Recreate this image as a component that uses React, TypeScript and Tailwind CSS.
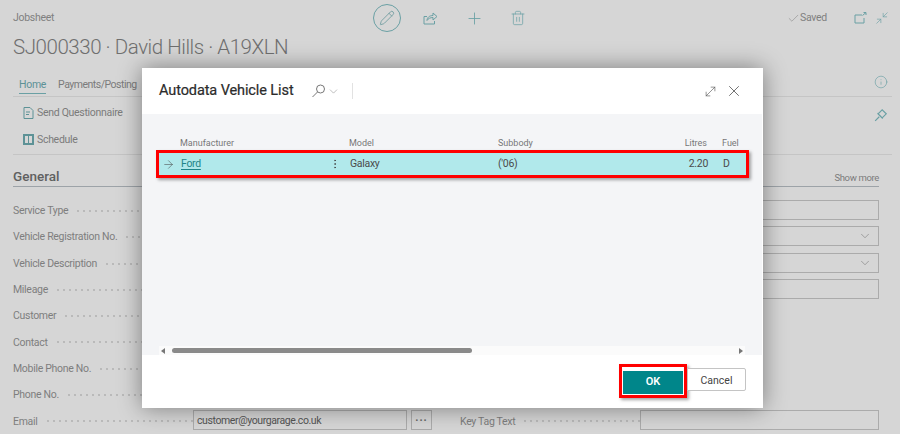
import { ArrowRight, Check, ChevronDown, EllipsisVertical, Info, Minimize2, MoveDiagonal, Pencil, Plus, Trash2, X } from "lucide-react";

const rows = [
  { label: "Service Type", right: "input" },
  { label: "Vehicle Registration No.", right: "select" },
  { label: "Vehicle Description", right: "select" },
  { label: "Mileage", right: "input" },
  { label: "Customer" },
  { label: "Contact" },
  { label: "Mobile Phone No." },
  { label: "Phone No." },
  { label: "Email", value: "customer@yourgarage.co.uk", rightLabel: "Key Tag Text", right: "input" },
];

function Dots() {
  return <div className="ml-[7px] h-[2px] flex-1 bg-[radial-gradient(circle,#b8b8b8_0.7px,transparent_0.9px)] bg-[length:6px_2px]" />;
}

function FormRow({ row }: { row: (typeof rows)[number] }) {
  return (
    <div className="flex h-[26.3px] items-start">
      <div className="flex h-[20px] w-[180px] shrink-0 items-center pt-[2px] text-[10.5px] tracking-[-0.3px] text-[#7e7e7e]">
        {row.label}
        <Dots />
      </div>
      <div className="h-[20px] w-[214px] shrink-0 border border-[#ababab] pl-[3px] text-[10.5px] leading-[19px] tracking-[-0.4px] text-[#555]">{row.value}</div>
      {row.value && <div className="ml-[4px] flex h-[20px] w-[21px] shrink-0 items-center justify-center border border-[#ababab] pb-[5px] text-[11px] leading-none font-bold tracking-[1px] text-[#666]">...</div>}
      <div className={row.value ? "ml-[28px] flex h-[20px] w-[180px] shrink-0 items-center pt-[2px] text-[10.5px] tracking-[-0.3px] text-[#7e7e7e]" : "ml-[53px] flex h-[20px] w-[180px] shrink-0 items-center pt-[2px] text-[10.5px] tracking-[-0.3px] text-[#7e7e7e]"}>
        {row.rightLabel}
        {row.rightLabel && <Dots />}
      </div>
      {row.right && (
        <div className="flex h-[20px] w-[239px] shrink-0 items-center justify-end border border-[#ababab] pr-[6px]">
          {row.right === "select" && <ChevronDown size={14} strokeWidth={1} className="text-[#777]" />}
        </div>
      )}
    </div>
  );
}

function Modal() {
  return (
    <div className="absolute top-[68px] left-[142px] flex h-[340px] w-[621px] flex-col bg-white shadow-[0_0_22px_rgba(0,0,0,0.42)]">
      <div className="flex h-[46px] shrink-0 items-center pr-[20px] pl-[17px]">
        <h2 className="text-[14.5px] leading-none font-normal tracking-[-0.1px] text-[#2b2b2b] [-webkit-text-stroke:0.2px_#2b2b2b]">Autodata Vehicle List</h2>
        <svg width="13" height="14" viewBox="0 0 13 14" fill="none" stroke="#777" className="ml-[18px]">
          <circle cx="8.500" cy="5" r="4" />
          <path d="M5.500 8 .5 13" />
        </svg>
        <ChevronDown size={13} strokeWidth={1} className="ml-[2px] text-[#888]" />
        <div className="ml-[12px] h-[16px] w-px bg-[#e2e2e2]" />
        <MoveDiagonal size={15} strokeWidth={1} className="ml-auto text-[#555]" />
        <X size={18} strokeWidth={1} className="ml-[7px] text-[#444]" />
      </div>
      <div className="mr-px flex min-h-0 flex-1 flex-col bg-[#f4f5f7] pt-[22px]">
        <div className="grid h-[14px] shrink-0 grid-cols-[169px_149px_182px_27px_1fr] pl-[38px] text-[9px] leading-[14px] text-[#777]">
          <span>Manufacturer</span>
          <span>Model</span>
          <span>Subbody</span>
          <span className="text-right">Litres</span>
          <span className="ml-[15px]">Fuel</span>
        </div>
        <div className="mx-[14px] h-[28px] w-[593px] shrink-0 border-[3px] border-[#ff0000] shadow-[2px_2px_3px_rgba(0,0,0,0.35)]">
          <div className="grid h-full grid-cols-[19px_150px_19px_148px_170px_40px_1fr] items-center bg-[#b1e9eb] pl-[3px] text-[10.5px] tracking-[-0.3px] text-[#4b4b4b]">
            <ArrowRight size={13} strokeWidth={1} className="text-[#444]" />
            <a className="text-[#1f8589] underline underline-offset-2">Ford</a>
            <EllipsisVertical size={12} strokeWidth={1.5} className="-ml-[2px] text-[#444]" />
            <span>Galaxy</span>
            <span>('06)</span>
            <span className="text-right">2.20</span>
            <span className="ml-[15px]">D</span>
          </div>
        </div>
        <div className="flex-1" />
        <div className="mx-[17px] flex h-[9px] shrink-0 items-center bg-[#fbfbfb] px-[2px]">
          <div className="h-0 w-0 border-y-[3px] border-r-[4px] border-y-transparent border-r-[#777]" />
          <div className="ml-[7px] h-[5px] w-[300px] rounded-full bg-[#8a8a8a]" />
          <div className="ml-auto h-0 w-0 border-y-[3px] border-l-[4px] border-y-transparent border-l-[#777]" />
        </div>
      </div>
      <div className="flex h-[53px] shrink-0 items-start justify-end pt-[9px] pr-[17px]">
        <div className="border-[3px] border-[#ff0000] p-px shadow-[2px_2px_3px_rgba(0,0,0,0.35)]">
          <button className="h-[23px] w-[60px] bg-[#00868a] text-[11px] font-semibold text-white">OK</button>
        </div>
        <button className="mt-[4px] h-[23px] w-[59px] rounded-r-[2px] border border-[#c4c4c4] bg-white pt-[2px] text-[10.5px] text-[#444]">Cancel</button>
      </div>
    </div>
  );
}

export default function App() {
  return (
    <div className="relative h-[434px] w-[900px] overflow-hidden bg-[#d6d6d6] pl-[13px] font-['Roboto','Noto_Sans',sans-serif]">
      <div className="flex h-[36px] items-center">
        <span className="w-[360px] shrink-0 text-[10.5px] tracking-[-0.3px] text-[#808080]">Jobsheet</span>
        <div className="flex h-[28px] w-[28px] shrink-0 items-center justify-center rounded-full border border-[#6aa0a4]">
          <Pencil size={16} strokeWidth={1.1} className="text-[#5d9296]" />
        </div>
        <svg width="15" height="14" viewBox="0 0 15 14" fill="none" stroke="#6aa0a4" className="ml-[22px] shrink-0">
          <path d="M4 5.500H1v7.500h10.500V10" />
          <path d="M4 9.500c0-3 2.500-5 6-5V2l4 3.500L10 9V6.500c-2.500 0-5 1-6 3z" />
        </svg>
        <Plus size={19} strokeWidth={1.1} className="ml-[27px] shrink-0 text-[#6aa0a4]" />
        <Trash2 size={16} strokeWidth={1.1} className="ml-[26px] shrink-0 text-[#6aa0a4]" />
        <Check size={13} strokeWidth={1} className="ml-[261px] shrink-0 text-[#808080]" />
        <span className="shrink-0 text-[10.5px] tracking-[-0.3px] text-[#808080]">Saved</span>
        <svg width="13" height="12" viewBox="0 0 13 12" fill="none" stroke="#6aa0a4" className="ml-[27px] shrink-0">
          <path d="M8 3H1v8h9V6" />
          <path d="M8.500 3.500 12 .5M9.500 .5H12V3" />
        </svg>
        <Minimize2 size={14} strokeWidth={1.1} className="ml-[8px] shrink-0 text-[#6aa0a4]" />
      </div>
      <h1 className="-mt-[3px] h-[28px] text-[20.5px] leading-[28px] font-light tracking-[-0.45px] text-[#6f6f6f]">SJ000330 · David Hills · A19XLN</h1>
      <div className="flex h-[36px] w-[879px] items-start border-b border-[#c5c5c5] pt-[16px] pr-[5px] pl-[6px] text-[10.5px] tracking-[-0.3px] text-[#7b7b7b]">
        <span className="border-b border-[#6aa0a4] text-[#5d9296]">Home</span>
        <span className="ml-[12px] tracking-[-0.5px]">Payments/Posting</span>
        <Info size={14} strokeWidth={1.1} className="mt-[-2px] mr-[-1px] ml-auto text-[#6aa0a4]" />
      </div>
      <div className="flex h-[58px] w-[879px] flex-col border-b border-[#c5c5c5] pt-[2px] pl-[10px] text-[10.5px] tracking-[-0.3px] text-[#7b7b7b]">
        <div className="flex h-[27px] items-center gap-[3px]">
          <svg width="11" height="12" viewBox="0 0 11 12" fill="none" stroke="#5d9296"><path d="M1 .5h6l3 3V11.500H1zM3 5h4M3 7.500h3" /></svg>
          Send Questionnaire
          <svg width="14" height="14" viewBox="0 0 12 12" fill="none" stroke="#6aa0a4" className="mt-[5px] mr-[4px] ml-auto">
            <path d="M1 11l3.500-3.500M3 4.500 7.500 9M3.500 5 7 1.500l3.500 3.500L7 8.500" />
          </svg>
        </div>
        <div className="flex h-[27px] items-center gap-[3px]">
          <div className="grid h-[11px] w-[11px] grid-cols-2 gap-px bg-[#5d9296] p-[2px]"><i className="bg-[#d6d6d6]" /><i className="bg-[#d6d6d6]" /></div>
          Schedule
        </div>
      </div>
      <div className="flex h-[32px] w-[866px] items-end justify-between border-b border-[#9da3a8]">
        <span className="text-[13.5px] leading-[20px] font-medium text-[#606060]">General</span>
        <span className="mb-[1px] text-[9.5px] tracking-[-0.35px] text-[#7b7b7b]">Show more</span>
      </div>
      <div className="pt-[13px]">
        {rows.map((row) => (
          <FormRow key={row.label} row={row} />
        ))}
      </div>
      <Modal />
    </div>
  );
}
